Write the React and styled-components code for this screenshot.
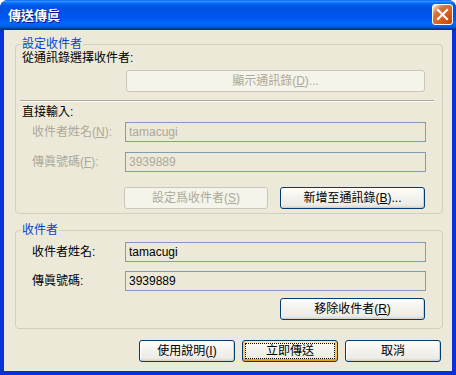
import React from 'react';
import styled, { createGlobalStyle, css } from 'styled-components';

const GlobalStyle = createGlobalStyle`
    html, body {
        margin: 0;
        padding: 0;
        background: #ffffff;
    }
    body {
        font-family: "Liberation Sans", "Noto Sans CJK TC", sans-serif;
        font-size: 12px;
    }
`;

function CloseIcon() {
    return (
        <svg width="13" height="13" viewBox="0 0 13 13">
            <path d="M2 2 L11 11 M11 2 L2 11" stroke="#ffffff" strokeWidth="2.2" strokeLinecap="square" />
        </svg>
    );
}

function App() {
    return (
        <>
            <GlobalStyle />
            <Window>
                <TitleBar>
                    <Title>傳送傳眞</Title>
                    <CloseButton><CloseIcon /></CloseButton>
                </TitleBar>
                <Client>
                    <Group $pb={4}>
                        <Legend>設定收件者</Legend>
                        <Caption>從通訊錄選擇收件者:</Caption>
                        <ButtonRow $mt={5} $ml={104}>
                            <Button disabled $w={299}>顯示通訊錄(<u>D</u>)...</Button>
                        </ButtonRow>
                        <Separator />
                        <Caption $mt={3}>直接輸入:</Caption>
                        <Field $mt={3}>
                            <FieldLabel $disabled>收件者姓名(<u>N</u>):</FieldLabel>
                            <TextBox disabled readOnly value="tamacugi" />
                        </Field>
                        <Field $mt={10}>
                            <FieldLabel $disabled>傳眞號碼(<u>F</u>):</FieldLabel>
                            <TextBox disabled readOnly value="3939889" />
                        </Field>
                        <ButtonRow $mt={15} $ml={102} $gap={12}>
                            <Button disabled $w={144}>設定爲收件者(<u>S</u>)</Button>
                            <Button $w={145}>新增至通訊錄(<u>B</u>)...</Button>
                        </ButtonRow>
                    </Group>
                    <Group $pb={8}>
                        <Legend>收件者</Legend>
                        <Field $mt={5}>
                            <FieldLabel>收件者姓名:</FieldLabel>
                            <TextBox readOnly value="tamacugi" />
                        </Field>
                        <Field $mt={9}>
                            <FieldLabel>傳眞號碼:</FieldLabel>
                            <TextBox readOnly value="3939889" />
                        </Field>
                        <ButtonRow $mt={7} $ml={258}>
                            <Button $w={145}>移除收件者(<u>R</u>)</Button>
                        </ButtonRow>
                    </Group>
                    <Footer>
                        <Button $w={96}>使用說明(<u>I</u>)</Button>
                        <Button $w={96} $default>立即傳送</Button>
                        <Button $w={96}>取消</Button>
                    </Footer>
                </Client>
            </Window>
        </>
    );
}

const Window = styled.div`
    width: 456px;
    height: 375px;
    display: flex;
    flex-direction: column;
    background: #0831d9;
    border-radius: 8px 8px 0 0;
    overflow: hidden;
    box-sizing: border-box;
`;

const TitleBar = styled.div`
    height: 30px;
    flex: none;
    display: flex;
    align-items: center;
    padding: 0 3px 1px 8px;
    box-sizing: border-box;
    background: linear-gradient(180deg, #0058ee 0%, #3a93ff 4%, #288eff 6%, #127dff 8%, #036ffc 10%, #0262ee 14%, #0057e5 20%, #0054e3 24%, #0055eb 56%, #005bf5 66%, #026afe 76%, #0062ef 86%, #0052d6 92%, #0040ab 94%, #003092 100%);
`;

const Title = styled.div`
    flex: 1;
    color: #ffffff;
    font-family: "Noto Sans CJK TC", sans-serif;
    font-weight: bold;
    font-size: 13px;
    line-height: 16px;
    text-shadow: 1px 1px #0f1089;
`;

const CloseButton = styled.div`
    width: 21px;
    height: 21px;
    box-sizing: border-box;
    border: 1px solid #ffffff;
    border-radius: 3px;
    display: flex;
    align-items: center;
    justify-content: center;
    background: radial-gradient(circle at 90% 90%, #cc4600 0%, #dc6527 55%, #cd7546 70%, #ffccb2 90%, #ffffff 100%);
`;

const Client = styled.div`
    flex: 1;
    margin: 0 4px 4px;
    background: #ece9d8;
    padding: 7px 9px 0 11px;
    display: flex;
    flex-direction: column;
`;

const Group = styled.fieldset`
    margin: 0;
    min-width: 0;
    padding: 0 16px ${p => p.$pb}px 6px;
    border: 1px solid #d0d0bf;
    border-radius: 4px;

    & + & {
        margin-top: 9px;
    }
`;

const Legend = styled.legend`
    padding: 0 1px;
    margin-left: -1px;
    color: #0046d5;
    font-size: 12px;
    line-height: 14px;
`;

const Caption = styled.div`
    line-height: 14px;
    color: #000000;
    margin-top: ${p => p.$mt || 0}px;
`;

const Separator = styled.div`
    width: 414px;
    margin: 8px 0 0 -2px;
    border-top: 1px solid #aca899;
    border-bottom: 1px solid #ffffff;
`;

const Field = styled.div`
    display: flex;
    align-items: center;
    margin-top: ${p => p.$mt}px;
`;

const FieldLabel = styled.div`
    width: 103px;
    padding-left: 10px;
    box-sizing: border-box;
    line-height: 14px;
    color: ${p => (p.$disabled ? '#aca899' : '#000000')};
`;

const TextBox = styled.input`
    width: 301px;
    height: 20px;
    box-sizing: border-box;
    margin: 0;
    padding: 0 3px;
    border: 1px solid #7f9db9;
    border-radius: 0;
    background: #ece9d8;
    font-family: "Liberation Sans", sans-serif;
    font-size: 12px;
    color: #000000;
    outline: none;

    &:disabled {
        color: #aca899;
        -webkit-text-fill-color: #aca899;
    }
`;

const ButtonRow = styled.div`
    display: flex;
    margin-top: ${p => p.$mt}px;
    margin-left: ${p => p.$ml}px;
    gap: ${p => p.$gap || 0}px;
`;

const Footer = styled.div`
    display: flex;
    justify-content: flex-end;
    gap: 7px;
    margin-top: 11px;
    padding-right: 2px;
`;

const Button = styled.button`
    width: ${p => p.$w}px;
    height: 22px;
    margin: 0;
    padding: 0;
    box-sizing: border-box;
    border: 1px solid #003c74;
    border-radius: 3px;
    background: linear-gradient(180deg, #ffffff 0%, #f4f3ee 40%, #ecebe6 86%, #d6d0c5 100%);
    box-shadow: inset -1px -1px 0 #d6d0c5, inset 1px 1px 0 #ffffff;
    font-family: "Liberation Sans", "Noto Sans CJK TC", sans-serif;
    font-size: 12px;
    line-height: 14px;
    color: #000000;

    ${p => p.$default && css`
        box-shadow: inset 0 -2px 0 #e5a01a, inset 2px 0 0 #f8c966, inset -2px 0 0 #f8c966, inset 0 2px 0 #fce7b6;
        outline: 1px dotted #000000;
        outline-offset: -4px;
    `}

    &:disabled {
        border-color: #c9c7ba;
        background: #f5f4ea;
        box-shadow: none;
        color: #aca899;
    }
`;

export default App;
